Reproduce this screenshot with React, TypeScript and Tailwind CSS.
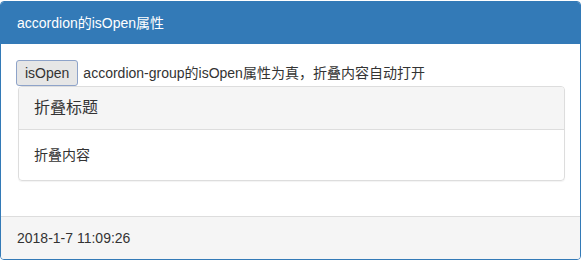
const font = { fontFamily: '"Liberation Sans", "Noto Sans CJK SC", sans-serif' };

export default function App() {
  return (
    <div className="w-[581px] pt-px text-[#333]" style={font}>
      <div className="overflow-hidden rounded border border-[#337ab7] bg-white">
        <div className="flex h-[42px] items-center bg-[#337ab7] px-4 text-sm text-white">
          accordion的isOpen属性
        </div>
        <div className="pb-[35px] pl-[15px] pr-[15px] pt-[16px]">
          <div className="flex items-center text-sm">
            <button className="h-[26px] rounded-[3px] border border-[#8ea3c9] bg-[#e6e6e6] px-[8px] text-sm text-[#333]">
              isOpen
            </button>
            <span className="ml-[5px]">accordion-group的isOpen属性为真，折叠内容自动打开</span>
          </div>
          <div className="ml-[2px] w-[547px] overflow-hidden rounded border border-[#ddd] shadow-[0_1px_1px_rgba(0,0,0,0.05)]">
            <div className="flex h-[43px] items-center border-b border-[#ddd] bg-[#f5f5f5] px-[15px] text-base">
              折叠标题
            </div>
            <div className="flex h-[50px] items-center px-[15px] text-sm">折叠内容</div>
          </div>
        </div>
        <div className="flex h-[43px] items-center border-t border-[#ddd] bg-[#f5f5f5] px-4 text-sm">
          2018-1-7 11:09:26
        </div>
      </div>
    </div>
  );
}
